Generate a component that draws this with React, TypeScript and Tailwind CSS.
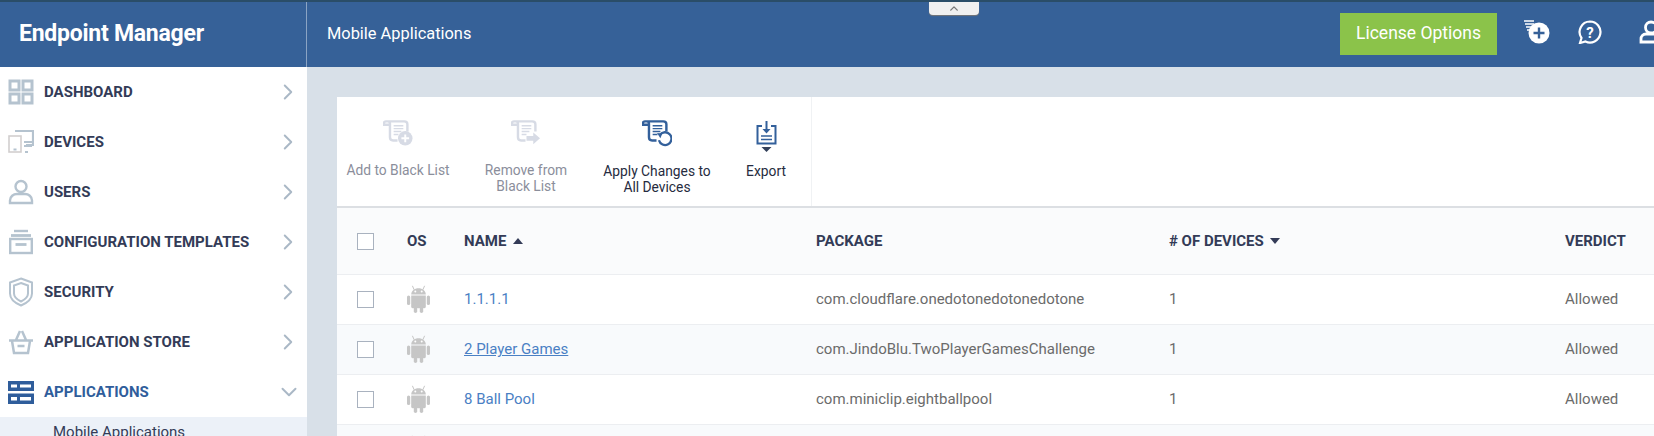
import { ChevronRight, ChevronDown, ChevronUp } from "lucide-react";
import type { ReactNode } from "react";

const ScrollBase = () => (
  <>
    <path d="M3 4.500h19c2 0 3.200 1.200 3.200 3V15M3 4.500C1.800 4.500 1 5.300 1 6.500V8h5M5 4.500c1.400 0 2.200.9 2.200 2.200V21c0 2 1.300 3.200 3.200 3.200H15" fill="none" stroke="currentColor" strokeWidth="2.500" />
    <path d="M11 9h10M11 12h10M11 15h8M11 18h5" fill="none" stroke="currentColor" strokeWidth="1.400" />
  </>
);

const AddListIcon = () => (
  <svg viewBox="0 3 31 27" className="w-[30px] h-[28px] text-[#d7dbe5]">
    <ScrollBase />
    <circle cx="23" cy="22" r="7.500" fill="currentColor" />
    <path d="M23 18v8M19 22h8" stroke="#fff" strokeWidth="2" />
  </svg>
);

const RemoveListIcon = () => (
  <svg viewBox="0 3 31 27" className="w-[30px] h-[28px] text-[#d7dbe5]">
    <ScrollBase />
    <path d="M16 19.500h7V16l7 6-7 6v-3.500h-7z" fill="currentColor" />
  </svg>
);

const ApplyIcon = () => (
  <svg viewBox="0 3 31 27" className="w-[30px] h-[28px] text-[#33609b]">
    <ScrollBase />
    <path d="M18.500 18.500a6.600 6.600 0 1 1-1 5.500" fill="none" stroke="currentColor" strokeWidth="2.400" />
    <path d="M15.500 16.500l5.500.5-2 5z" fill="currentColor" />
  </svg>
);

const ExportIcon = () => (
  <svg viewBox="0 0 21 31" className="w-[21px] h-[31px] mt-[2px] text-[#33609b]">
    <path d="M6 5H1.500v17.500h18V5H15" fill="none" stroke="currentColor" strokeWidth="2" />
    <path d="M10.500 0v11" stroke="currentColor" strokeWidth="2" />
    <path d="M6.500 8l4 4.500 4-4.500z" fill="currentColor" />
    <path d="M5 15h11M5 18.500h11" stroke="currentColor" strokeWidth="1.400" />
    <path d="M5.500 26h10l-5 5z" fill="#33405a" />
  </svg>
);

const AndroidIcon = () => (
  <svg viewBox="0 0 23 28" className="w-[23px] h-[28px] mt-[-2px] text-[#c6c6c6]" fill="currentColor">
    <path d="M4.200 9.600C4.200 5.800 7.500 3.200 11.500 3.200S18.800 5.800 18.800 9.600z" />
    <path d="M7.200 4.800L5.400.8M15.800 4.800l1.800-4" stroke="currentColor" strokeWidth="1" />
    <circle cx="8.300" cy="6.600" r="1" fill="#fff" />
    <circle cx="14.700" cy="6.600" r="1" fill="#fff" />
    <path d="M4.200 10.500h14.600v11.300c0 .8-.6 1.400-1.400 1.400H5.600c-.8 0-1.400-.6-1.400-1.400z" />
    <rect x="0" y="10.500" width="3.200" height="9.500" rx="1.600" />
    <rect x="19.800" y="10.500" width="3.200" height="9.500" rx="1.600" />
    <rect x="6.800" y="22" width="3.400" height="6" rx="1.700" />
    <rect x="12.800" y="22" width="3.400" height="6" rx="1.700" />
  </svg>
);

const navIconClass = "w-[26px] h-[26px] text-[#b5c3cf]";

const navItems: { label: string; icon: ReactNode }[] = [
  {
    label: "DASHBOARD",
    icon: (
      <svg viewBox="0 0 26 26" className={navIconClass} fill="none" stroke="currentColor" strokeWidth="3">
        <rect x="2" y="2" width="9" height="9" />
        <rect x="15" y="2" width="9" height="9" />
        <rect x="2" y="15" width="9" height="9" />
        <rect x="15" y="15" width="9" height="9" />
      </svg>
    ),
  },
  {
    label: "DEVICES",
    icon: (
      <svg viewBox="0 0 26 26" className={navIconClass} fill="none" stroke="currentColor" strokeWidth="1.600">
        <path d="M7 2h18v14h-7" strokeWidth="2.200" />
        <rect x="1" y="7" width="12" height="16" stroke="#d2cfcf" />
        <path d="M5.500 20.500h3M16 13h8M16 17h8M17 23h3" strokeWidth="1.800" />
      </svg>
    ),
  },
  {
    label: "USERS",
    icon: (
      <svg viewBox="0 0 26 26" className={navIconClass} fill="none" stroke="currentColor" strokeWidth="2.400">
        <circle cx="13" cy="7.500" r="5.500" />
        <path d="M2 24v-2.500c0-4 3.500-6.500 7-6.500h8c3.500 0 7 2.500 7 6.500V24z" />
      </svg>
    ),
  },
  {
    label: "CONFIGURATION TEMPLATES",
    icon: (
      <svg viewBox="0 0 26 26" className={navIconClass} fill="none" stroke="currentColor" strokeWidth="2.400">
        <path d="M6 2h14" strokeWidth="2.400" />
        <path d="M3 6.500h20" strokeWidth="2.800" />
        <rect x="2.200" y="10" width="21.600" height="14" />
        <path d="M7.500 15.500h11" strokeWidth="2.800" />
      </svg>
    ),
  },
  {
    label: "SECURITY",
    icon: (
      <svg viewBox="0 0 26 30" className="w-[26px] h-[30px] text-[#b5c3cf]" fill="none" stroke="currentColor">
        <path d="M13 1.500l11 4v11c0 5.500-5 9.500-11 12-6-2.500-11-6.500-11-12v-11z" strokeWidth="2" />
        <path d="M13 6l7 2.500v8c0 3.500-3 6-7 8-4-2-7-4.500-7-8v-8z" strokeWidth="2" />
      </svg>
    ),
  },
  {
    label: "APPLICATION STORE",
    icon: (
      <svg viewBox="0 0 26 26" className={navIconClass} fill="none" stroke="currentColor" strokeWidth="2.500">
        <path d="M1 11.500h24M4 12l2 12h14l2-12M8 11l4-9M18 11l-4-9M9.500 17h7" />
      </svg>
    ),
  },
];

const ToolbarButton = ({ icon, lines, width, disabled }: { icon: ReactNode; lines: string[]; width: string; disabled?: boolean }) => (
  <div className={`${width} flex flex-col items-center pt-[22px] text-[13.800px] leading-[16px] text-center ${disabled ? "text-[#8b8e9b]" : "text-[#262b40]"}`}>
    <div className="h-[31px] flex items-start">{icon}</div>
    <div className={disabled ? "mt-[12px]" : "mt-[13px]"}>
      {lines.map((l) => (
        <div key={l}>{l}</div>
      ))}
    </div>
  </div>
);

const Checkbox = () => <div className="w-[17px] h-[17px] border border-[#a9b2bf] bg-white" />;

const rows = [
  { name: "1.1.1.1", pkg: "com.cloudflare.onedotonedotonedotone", bg: "bg-white" },
  { name: "2 Player Games", pkg: "com.JindoBlu.TwoPlayerGamesChallenge", bg: "bg-[#f8fafc]", hover: true },
  { name: "8 Ball Pool", pkg: "com.miniclip.eightballpool", bg: "bg-white" },
  { name: "", pkg: "", bg: "bg-[#f8fafc]" },
];

const gridCols = "grid grid-cols-[50px_57px_352px_353px_396px_1fr] items-center pl-5";

export default function App() {
  return (
    <div className="w-[1654px] h-[436px] overflow-hidden bg-[#d8e0e8] font-['Roboto',sans-serif] flex flex-col">
      {/* Header */}
      <header className="relative h-[67px] shrink-0 bg-[#366198] border-t-2 border-[#2a4d68] flex items-center text-white">
        <div className="w-[307px] h-full shrink-0 border-r border-[#8ba4c4] pl-[19px] flex items-center text-[23px] font-bold tracking-[-0.25px]">
          Endpoint Manager
        </div>
        <div className="pl-[20px] text-[16.400px] flex-1">Mobile Applications</div>
        <div className="w-[157px] h-[42px] mt-[-1px] pb-[1px] bg-[#8bc34a] flex items-center justify-center text-[17.500px]">License Options</div>
        <div className="w-[157px] h-full flex items-center overflow-hidden pl-[27px] pb-[6px] shrink-0">
          <svg viewBox="0 0 26 24" className="w-[26px] h-[24px] shrink-0">
            <path d="M0 1h10M1 4h9M2 7h6M3 10h4" stroke="#fff" strokeWidth="1.300" />
            <circle cx="15" cy="13" r="10.500" fill="#fff" />
            <path d="M15 7.500v11M9.500 13h11" stroke="#366198" strokeWidth="2.400" />
          </svg>
          <svg viewBox="0 0 24 24" className="w-[24px] h-[24px] ml-[28px] shrink-0" fill="none">
            <path d="M12 1.500a10.500 10.500 0 1 1-4.500 20l-5.500 1.500 1.500-5A10.500 10.500 0 0 1 12 1.500z" stroke="#fff" strokeWidth="2.200" />
            <text x="12" y="17.500" textAnchor="middle" fontSize="15" fontWeight="700" fill="#fff">?</text>
          </svg>
          <svg viewBox="0 0 24 24" className="w-[24px] h-[24px] ml-[37px] shrink-0" fill="none" stroke="#fff" strokeWidth="2.800">
            <circle cx="12" cy="7.500" r="5.500" />
            <path d="M2 22v-3c0-3 2-5 5-5h10c3 0 5 2 5 5v3z" />
          </svg>
        </div>
        <div className="absolute left-[929px] top-0 w-[50px] h-[13px] bg-[#f0f0f0] rounded-b-[4px] shadow-[0_1px_1px_#777] flex items-center justify-center">
          <ChevronUp className="w-[16px] h-[13px] text-[#777]" strokeWidth={2.500} />
        </div>
      </header>

      <div className="flex flex-1 min-h-0">
        {/* Sidebar */}
        <aside className="w-[307px] shrink-0 bg-white">
          {navItems.map((item) => (
            <div key={item.label} className="h-[50px] flex items-center pl-[8px] pr-[6px]">
              <div className="w-[26px] flex justify-center">{item.icon}</div>
              <span className="ml-[10px] flex-1 text-[15px] font-bold text-[#333b57]">{item.label}</span>
              <ChevronRight className="w-[26px] h-[26px] text-[#aab8c6]" strokeWidth={1.800} />
            </div>
          ))}
          <div className="h-[50px] flex items-center pl-[8px] pr-[5px]">
            <svg viewBox="0 0 26 23" className="w-[26px] h-[23px] text-[#2f5d9b]">
              <path d="M0 0h26v10H0zM0 12.500h26V23H0z" fill="currentColor" />
              <path d="M0 10.600h26" stroke="#fff" strokeWidth=".6" />
              <path d="M3 3.500h6v3H3zM12 3.500h11v3H12zM3 16h6v3.500H3zM12 16h11v3.500H12z" fill="#fff" />
            </svg>
            <span className="ml-[10px] flex-1 text-[15px] font-bold text-[#2f5d9b]">APPLICATIONS</span>
            <ChevronDown className="w-[26px] h-[26px] text-[#aab8c6]" strokeWidth={1.800} />
          </div>
          <div className="h-[40px] bg-[#ecf1f8] pl-[53px] pt-[4px] text-[15px] text-[#333b57]">Mobile Applications</div>
        </aside>

        {/* Main */}
        <main className="flex-1 min-w-0 pl-[30px] pt-[30px]">
          <div className="bg-white h-full">
            <div className="h-[111px] flex border-b-2 border-[#dcdfe3]">
              <div className="flex border-r border-[#f0f2f4]">
                <ToolbarButton icon={<AddListIcon />} lines={["Add to Black List"]} width="w-[122px]" disabled />
                <ToolbarButton icon={<RemoveListIcon />} lines={["Remove from", "Black List"]} width="w-[134px]" disabled />
                <ToolbarButton icon={<ApplyIcon />} lines={["Apply Changes to", "All Devices"]} width="w-[128px]" />
                <ToolbarButton icon={<ExportIcon />} lines={["Export"]} width="w-[90px]" />
              </div>
            </div>

            <div className={`${gridCols} h-[67px] bg-[#fafbfc] border-b border-[#eceef1] text-[15px] font-bold text-[#333b57]`}>
              <Checkbox />
              <span>OS</span>
              <span className="flex items-center gap-[7px]">
                NAME
                <span className="w-0 h-0 border-x-[5px] border-x-transparent border-b-[6px] border-b-[#333b57]" />
              </span>
              <span>PACKAGE</span>
              <span className="flex items-center gap-[6px]">
                # OF DEVICES
                <span className="w-0 h-0 border-x-[5px] border-x-transparent border-t-[6px] border-t-[#333b57]" />
              </span>
              <span>VERDICT</span>
            </div>

            {rows.map((r, i) => (
              <div key={i} className={`${gridCols} h-[50px] ${r.bg} border-b border-[#eceef1] text-[15px] text-[#6b6b6b]`}>
                <Checkbox />
                <AndroidIcon />
                <span className={`text-[#4a80c4] ${r.hover ? "underline" : ""}`}>{r.name}</span>
                <span>{r.pkg}</span>
                <span>{r.pkg ? "1" : ""}</span>
                <span>{r.pkg ? "Allowed" : ""}</span>
              </div>
            ))}
          </div>
        </main>
      </div>
    </div>
  );
}
